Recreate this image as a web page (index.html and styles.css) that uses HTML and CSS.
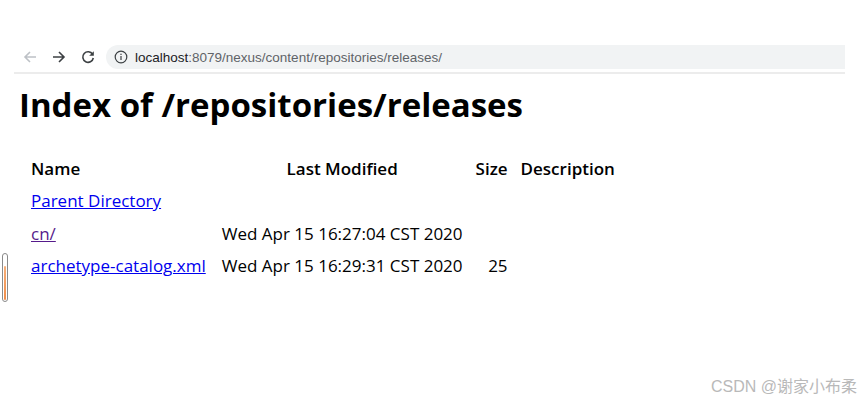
FILE: index.html
```html
<!DOCTYPE html>
<html>
<head>
<meta charset="utf-8">
<link rel="stylesheet" href="styles.css">
</head>
<body>
<div class="chrome">
  <div class="nav">
    <svg class="ico back" width="16" height="16" viewBox="0 0 16 16"><path d="M14 8H3M8 3L3 8l5 5" fill="none" stroke="#bdc1c6" stroke-width="1.6"/></svg>
    <svg class="ico fwd" width="16" height="16" viewBox="0 0 16 16"><path d="M2 8h11M8 3l5 5-5 5" fill="none" stroke="#3c4043" stroke-width="1.6"/></svg>
    <svg class="ico reload" width="16" height="16" viewBox="0 0 16 16"><path d="M12.6 5.2A5.3 5.3 0 1 0 13.3 9" fill="none" stroke="#3c4043" stroke-width="1.6"/><path d="M13.8 2.2v4.6H9.2z" fill="#3c4043"/></svg>
  </div>
  <div class="omnibox">
    <svg class="info" width="14" height="14" viewBox="0 0 14 14"><circle cx="7" cy="7" r="5.8" fill="none" stroke="#3c4043" stroke-width="1.2"/><rect x="6.4" y="6" width="1.2" height="4" fill="#3c4043"/><rect x="6.4" y="3.7" width="1.2" height="1.3" fill="#3c4043"/></svg>
    <span class="url"><span class="host">localhost</span>:8079/nexus/content/repositories/releases/</span>
  </div>
</div>
<div class="rule"></div>
<main class="page">
  <h1 class="title">Index of /repositories/releases</h1>
  <table class="listing">
    <tr class="head">
      <th class="left">Name</th>
      <th>Last Modified</th>
      <th>Size</th>
      <th>Description</th>
    </tr>
    <tr>
      <td><a href="#">Parent Directory</a></td>
      <td></td><td></td><td></td>
    </tr>
    <tr>
      <td><a href="#" class="visited">cn/</a></td>
      <td>Wed Apr 15 16:27:04 CST 2020</td>
      <td class="num"></td><td></td>
    </tr>
    <tr>
      <td><a href="#">archetype-catalog.xml</a></td>
      <td>Wed Apr 15 16:29:31 CST 2020</td>
      <td class="num">25</td><td></td>
    </tr>
  </table>
</main>
<div class="slider"><div class="fill"></div></div>
<div class="watermark">CSDN @谢家小布柔</div>
</body>
</html>
```

FILE: styles.css
```css
html, body {
  margin: 0;
  padding: 0;
  background: #fff;
}
body {
  width: 861px;
  height: 403px;
  position: relative;
  overflow: hidden;
  font-family: "Open Sans", "DejaVu Sans", sans-serif;
}
.chrome {
  display: flex;
  align-items: center;
  padding: 45px 16px 0 22px;
  height: 24px;
}
.nav {
  display: flex;
  align-items: center;
  gap: 13px;
  width: 84px;
}
.omnibox {
  flex: 0 0 739px;
  height: 24px;
  background: #f1f3f4;
  border-radius: 12px 0 0 12px;
  display: flex;
  align-items: center;
  padding-left: 8px;
  box-sizing: border-box;
}
.info { margin-right: 7px; }
.url {
  font-family: "Liberation Sans", Arial, sans-serif;
  font-size: 13.5px;
  color: #5f6368;
}
.host { color: #202124; }
.rule {
  margin: 3px 16px 0 14px;
  height: 2px;
  background: #ececec;
}
.page {
  padding-left: 19px;
}
.title {
  margin: 11px 0 0 0;
  font-size: 33px;
  font-weight: 700;
  line-height: 40px;
  color: #000;
}
.listing {
  margin: 27px 0 0 5px;
  border-collapse: separate;
  border-spacing: 0;
  font-size: 17px;
  color: #000;
}
.listing th, .listing td {
  padding: 0 6px 0 7px;
  height: 32.5px;
  white-space: nowrap;
}
.listing th:first-child, .listing td:first-child { padding-right: 9px; }
.listing td.date { letter-spacing: -0.05px; }
.listing th { font-weight: 600; text-align: center; }
.listing th.left { text-align: left; }
.listing td.num { text-align: right; }
.listing a { color: #0000ee; }
.listing a.visited { color: #551a8b; }
.slider {
  position: absolute;
  left: 2px;
  top: 253px;
  width: 4px;
  height: 47px;
  border: 1.5px solid #8a8a8a;
  border-radius: 4px;
  background: #fff;
}
.slider .fill {
  position: absolute;
  left: 1px;
  right: 1px;
  bottom: 1px;
  height: 34px;
  background: linear-gradient(#f7b07a, #ef8c48);
  border-radius: 1px;
}
.watermark {
  position: absolute;
  right: 4px;
  bottom: 6px;
  font-family: "Liberation Sans", "Noto Sans CJK SC", sans-serif;
  font-size: 16px;
  color: #b9b9b9;
}
```
